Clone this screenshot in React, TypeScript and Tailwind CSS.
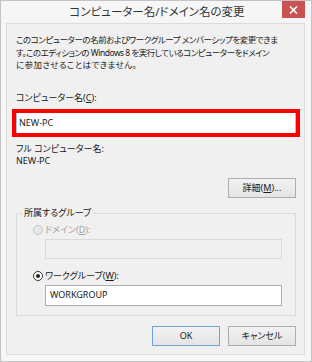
import React from "react";

const font = "font-['Noto_Sans','Noto_Sans_CJK_JP',sans-serif] [font-feature-settings:'palt']";

function Radio({ checked, disabled }: { checked?: boolean; disabled?: boolean }) {
  return (
    <span
      className={
        "inline-flex items-center justify-center w-[10px] h-[10px] rounded-full border mr-[2px] " +
        (disabled ? "border-[#c6c6c6] bg-[#e8e8e8]" : "border-[#333333] bg-white")
      }
    >
      {checked && <span className="w-[4px] h-[4px] rounded-full bg-[#222222]" />}
    </span>
  );
}

function Btn({ children, primary }: { children: React.ReactNode; primary?: boolean }) {
  return (
    <div
      className={
        "w-[68px] h-[20px] flex items-center justify-center text-[9px] text-[#1a1a1a] bg-gradient-to-b from-[#f2f2f2] to-[#e4e4e4] border " +
        (primary ? "border-[#6fa3dc]" : "border-[#adadad]")
      }
    >
      {children}
    </div>
  );
}

export default function App() {
  return (
    <div className={"w-[312px] h-[362px] bg-[#f6f6f6] border border-[#c4c4c4] flex flex-col relative " + font}>
      <div className="h-[22px] flex items-center justify-center text-[11.5px] text-[#333333] pl-[2px]">
        コンピューター名/ドメイン名の変更
      </div>
      <div className="absolute right-[6px] top-0 w-[23px] h-[17px] bg-[#c85352] flex items-center justify-center">
        <svg width="9" height="8" viewBox="0 0 9 8">
          <path d="M1 0.5 L8 7.5 M8 0.5 L1 7.5" stroke="white" strokeWidth="1.6" />
        </svg>
      </div>
      <div className="flex-1 ml-[5px] mr-[6px] mb-[6px] border border-[#dcdcdc] bg-[#f0f0f0] pl-[9px] pr-[8px] pt-[10px] flex flex-col text-[9px] text-[#1a1a1a]">
        <div className="leading-[12.5px] whitespace-nowrap text-[8.5px]">
          <div className="tracking-[-0.45px]">このコンピューターの名前およびワークグループ メンバーシップを変更できま</div>
          <div className="tracking-[-0.5px]">す。このエディションの Windows 8 を実行しているコンピューターをドメイン</div>
          <div className="tracking-[0.4px]">に参加させることはできません。</div>
        </div>
        <div className="mt-[20px] leading-[12px]">
          コンピューター名(<span className="underline">C</span>):
        </div>
        <div className="-mx-[4px] mt-[5px] border-[4px] border-[#ff0000]">
          <div className="h-[20px] bg-white border-x border-[#9cc4ea] flex items-center px-[2px]">NEW-PC</div>
        </div>
        <div className="mt-[6px] leading-[12px]">フル コンピューター名:</div>
        <div className="leading-[12px]">NEW-PC</div>
        <div className="flex justify-end mt-[11px]">
          <Btn>
            詳細(<span className="underline">M</span>)...
          </Btn>
        </div>
        <div className="relative mt-[15px] h-[103px] border border-[#dadada] pl-[16px] pr-[13px] pt-[10px]">
          <div className="absolute -top-[7px] left-[5px] bg-[#f0f0f0] px-[2px] leading-[12px]">所属するグループ</div>
          <div className="flex items-center leading-[12px] text-[#a3a3a3]">
            <Radio disabled />
            ドメイン(<span className="underline">D</span>):
          </div>
          <div className="ml-[12px] mt-[3px] h-[20px] border border-[#d9d9d9] bg-[#f0f0f0]" />
          <div className="flex items-center leading-[12px] mt-[11px]">
            <Radio checked />
            ワークグループ(<span className="underline">W</span>):
          </div>
          <div className="ml-[12px] mt-[3px] h-[21px] border border-[#adadad] bg-white flex items-center px-[4px]">
            WORKGROUP
          </div>
        </div>
        <div className="flex justify-end gap-[8px] mt-[10px]">
          <Btn primary>OK</Btn>
          <Btn>キャンセル</Btn>
        </div>
      </div>
    </div>
  );
}
